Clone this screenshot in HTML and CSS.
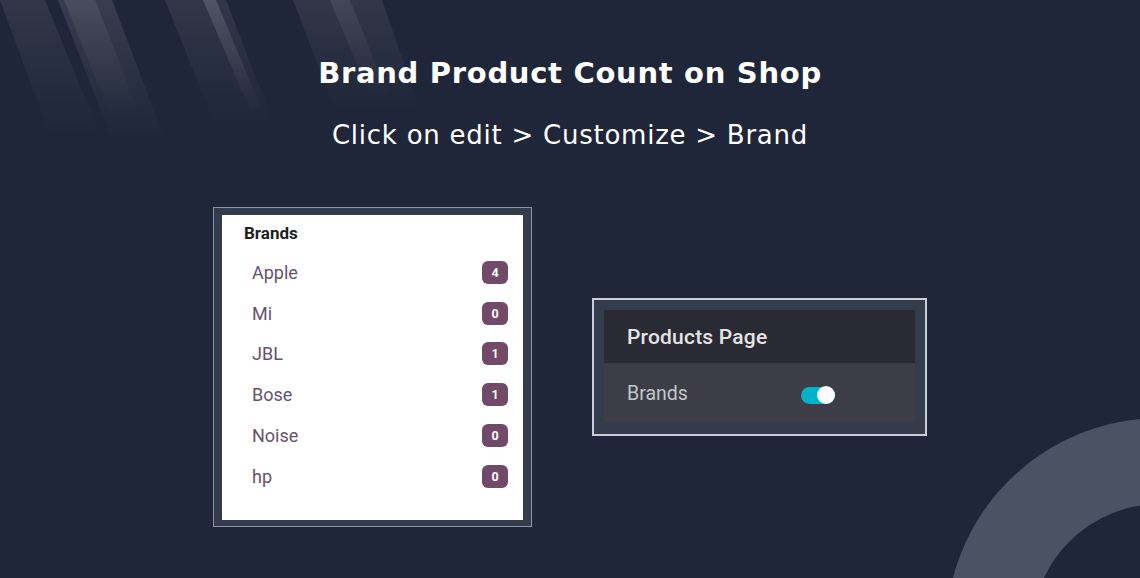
FILE: index.html
```html
<!DOCTYPE html>
<html lang="en">
<head>
<meta charset="utf-8">
<title>Brand Product Count on Shop</title>
<link rel="stylesheet" href="styles.css">
</head>
<body>
  <div class="deco" aria-hidden="true">
    <svg class="deco-stripes" width="440" height="160" viewBox="0 0 440 160">
      <defs>
        <linearGradient id="fadeA" x1="0" y1="0" x2="0" y2="1">
          <stop offset="0" stop-color="#ffffff" stop-opacity="0.08"/>
          <stop offset="1" stop-color="#ffffff" stop-opacity="0"/>
        </linearGradient>
        <linearGradient id="fadeB" x1="0" y1="0" x2="0" y2="1">
          <stop offset="0" stop-color="#ffffff" stop-opacity="0.11"/>
          <stop offset="1" stop-color="#ffffff" stop-opacity="0"/>
        </linearGradient>
        <linearGradient id="fadeC" x1="0" y1="0" x2="0" y2="1">
          <stop offset="0" stop-color="#ffffff" stop-opacity="0.15"/>
          <stop offset="1" stop-color="#ffffff" stop-opacity="0"/>
        </linearGradient>
      </defs>
      <polygon points="0,0 45,0 100,135 50,135" fill="url(#fadeA)"/>
      <polygon points="58,0 112,0 165,140 112,140" fill="url(#fadeB)"/>
      <polygon points="64,0 95,0 140,115 110,115" fill="url(#fadeA)"/>
      <polygon points="165,0 226,0 274,125 215,125" fill="url(#fadeA)"/>
      <polygon points="203,0 216,0 264,115 252,115" fill="url(#fadeC)"/>
      <polygon points="293,0 382,0 420,110 335,110" fill="url(#fadeA)"/>
      <polygon points="330,0 350,0 390,100 372,100" fill="url(#fadeA)"/>
    </svg>
    <div class="deco-ring"></div>
  </div>

  <main class="page">
    <h1 class="title">Brand Product Count on Shop</h1>
    <p class="subtitle">Click on edit &gt; Customize &gt; Brand</p>

    <div class="cards">
      <div class="frame frame-brands">
        <div class="brands-panel">
          <div class="brands-head">Brands</div>
          <ul class="brand-list">
            <li class="brand-item"><span class="brand-name">Apple</span><span class="badge">4</span></li>
            <li class="brand-item"><span class="brand-name">Mi</span><span class="badge">0</span></li>
            <li class="brand-item"><span class="brand-name">JBL</span><span class="badge">1</span></li>
            <li class="brand-item"><span class="brand-name">Bose</span><span class="badge">1</span></li>
            <li class="brand-item"><span class="brand-name">Noise</span><span class="badge">0</span></li>
            <li class="brand-item"><span class="brand-name">hp</span><span class="badge">0</span></li>
          </ul>
        </div>
      </div>

      <div class="frame frame-settings">
        <div class="settings-panel">
          <div class="settings-head">Products Page</div>
          <div class="settings-row">
            <span class="settings-label">Brands</span>
            <span class="toggle"><span class="toggle-knob"></span></span>
          </div>
        </div>
      </div>
    </div>
  </main>
</body>
</html>
```

FILE: styles.css
```css
html, body {
  margin: 0;
  padding: 0;
}

body {
  width: 1140px;
  height: 578px;
  overflow: hidden;
  position: relative;
  background: #1f2639;
  font-family: "DejaVu Sans", "Inter", sans-serif;
}

.deco {
  position: absolute;
  left: 0;
  top: 0;
  width: 1140px;
  height: 578px;
  overflow: hidden;
}

.deco-stripes {
  position: absolute;
  left: 0;
  top: 0;
}

.deco-ring {
  position: absolute;
  left: 946px;
  top: 418px;
  width: 428px;
  height: 428px;
  box-sizing: border-box;
  border-radius: 50%;
  border: 86px solid #4b5263;
}

.page {
  position: relative;
  display: flex;
  flex-direction: column;
  align-items: center;
  padding-top: 55px;
}

.title {
  margin: 0;
  font-size: 29px;
  line-height: 36px;
  font-weight: 700;
  color: #ffffff;
  letter-spacing: 0.7px;
}

.subtitle {
  margin: 28px 0 0;
  font-size: 26px;
  line-height: 32px;
  font-weight: 400;
  color: #ffffff;
  letter-spacing: 0.75px;
}

.cards {
  margin-top: 56px;
  display: flex;
  align-items: center;
  gap: 60px;
}

.frame {
  box-sizing: border-box;
  background: #343b4d;
}

.frame-brands {
  border: 1px solid #8e94a1;
  padding: 7px 8px 6px 8px;
}

.brands-panel {
  width: 301px;
  height: 305px;
  box-sizing: border-box;
  background: #ffffff;
  padding: 8px 15px 0 22px;
  font-family: "Roboto", "Liberation Sans", sans-serif;
}

.brands-head {
  font-size: 17px;
  line-height: 20px;
  font-weight: 700;
  color: #1f1f1f;
}

.brand-list {
  list-style: none;
  margin: 9px 0 0;
  padding: 0 0 0 8px;
}

.brand-item {
  height: 40.8px;
  display: flex;
  align-items: center;
  justify-content: space-between;
}

.brand-name {
  font-size: 18px;
  color: #67526c;
}

.badge {
  width: 26px;
  height: 23px;
  border-radius: 6px;
  background: #704a68;
  color: #ffffff;
  font-size: 12.5px;
  font-weight: 700;
  display: flex;
  align-items: center;
  justify-content: center;
}

.frame-settings {
  border: 2px solid #c9ced6;
  padding: 10px 10px 12px 10px;
}

.settings-panel {
  width: 311px;
  font-family: "Roboto", "Liberation Sans", sans-serif;
}

.settings-head {
  height: 53px;
  box-sizing: border-box;
  background: #2a2a34;
  padding-left: 23px;
  display: flex;
  align-items: center;
  font-size: 21px;
  font-weight: 500;
  letter-spacing: 0.2px;
  color: #e4e4e4;
}

.settings-row {
  height: 59px;
  box-sizing: border-box;
  background: #3c3d47;
  padding-left: 23px;
  display: flex;
  align-items: center;
  font-size: 19.5px;
  color: #c4c6c9;
}

.settings-label {
  width: 174px;
  margin-top: 1px;
}

.toggle {
  width: 34px;
  height: 17px;
  margin-top: 5px;
  border-radius: 9px;
  background: #00b3cb;
  display: flex;
  align-items: center;
  justify-content: flex-end;
}

.toggle-knob {
  width: 18px;
  height: 18px;
  border-radius: 50%;
  background: #ffffff;
  flex: none;
}
```
